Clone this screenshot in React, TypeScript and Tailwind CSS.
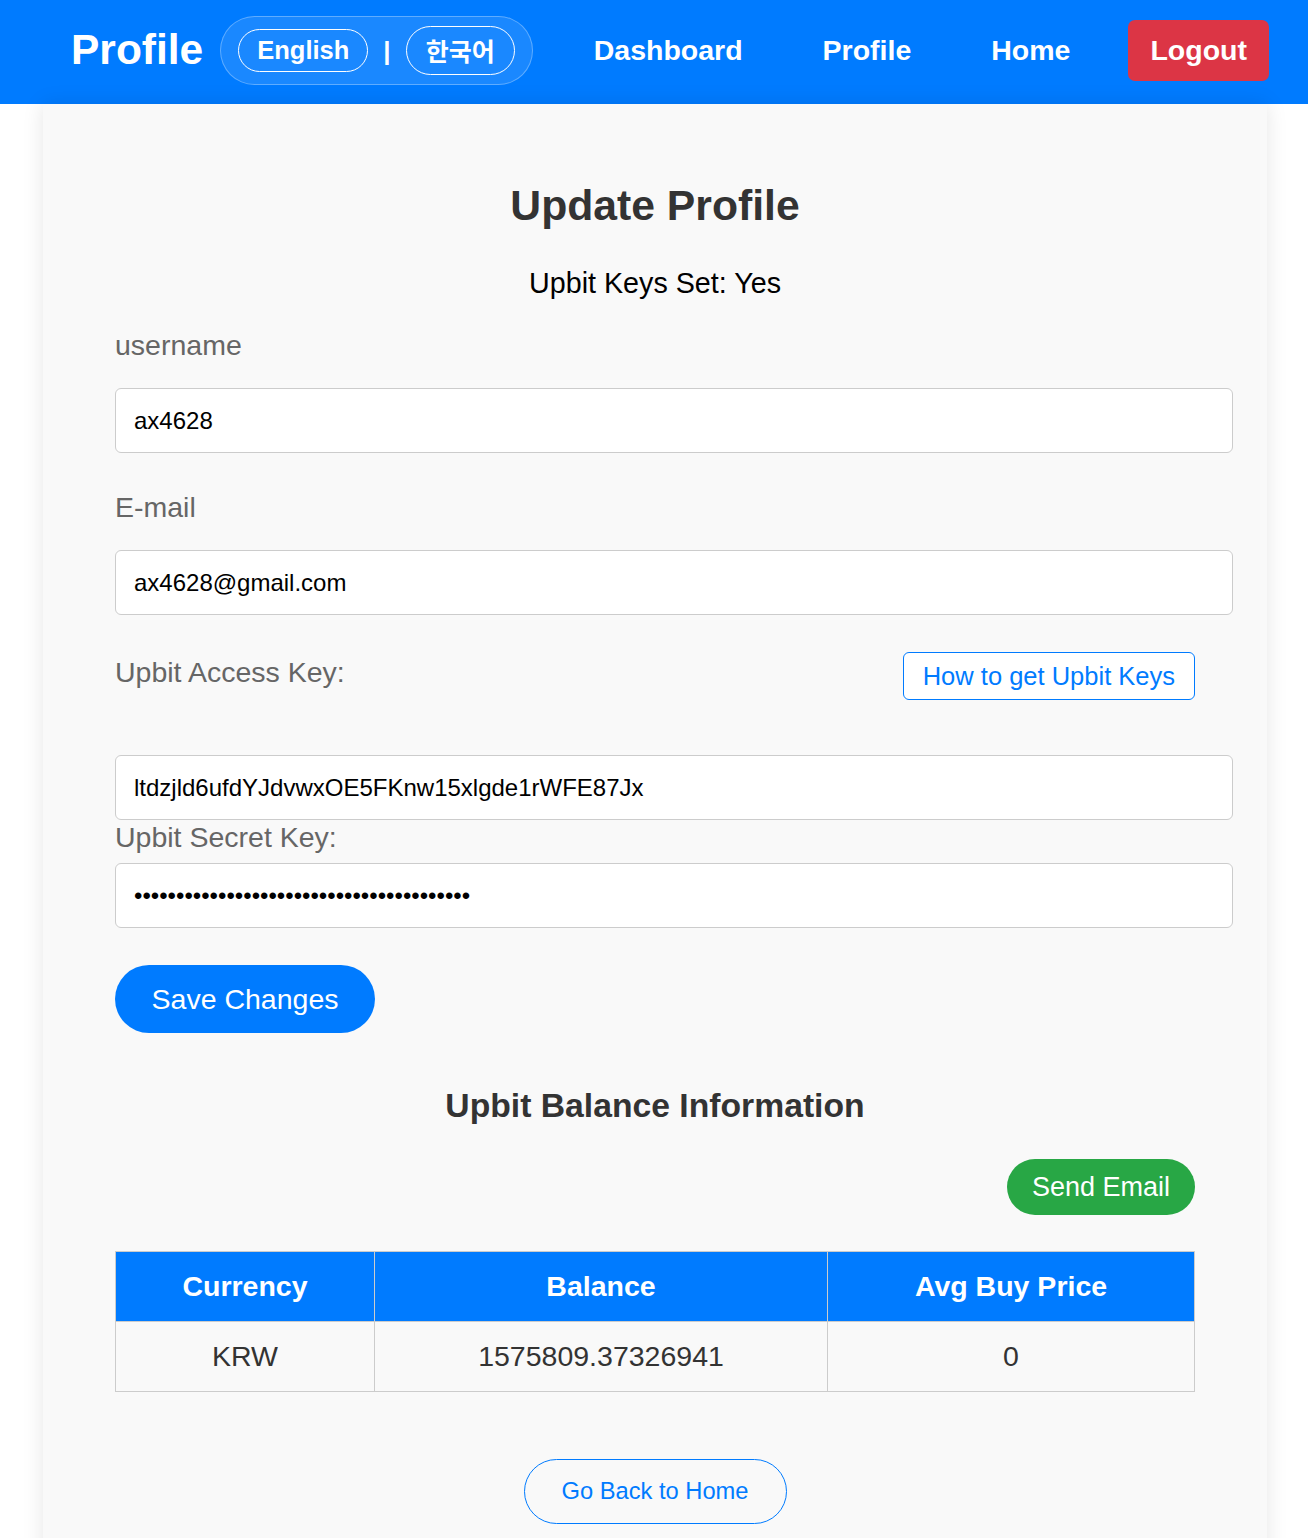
import React from "react";

const F = { fontFamily: '"Liberation Sans", Arial, sans-serif' };

const inputCls =
  "w-[1118px] rounded-[6px] border border-[#ccc] bg-white px-[18px] py-[18px] text-[24px] leading-[27px] text-black";

export default function App() {
  return (
    <div className="min-h-[1538px] bg-white" style={F}>
      <nav className="flex h-[104px] items-center bg-[#007bff] pb-[3px] pl-[71px] pr-[39px] text-white">
        <div className="flex items-center">
          <span className="text-[42.5px] font-bold leading-none">Profile</span>
          <div className="ml-[17px] flex items-center rounded-full border border-white/30 bg-white/10 px-[17px] py-[9px]">
            <button className="rounded-full border border-white px-[18px] py-[6px] text-[25.5px] font-bold leading-[1.15] text-white">
              English
            </button>
            <span className="mx-[15px] text-[26px] font-bold leading-none">|</span>
            <button
              className="rounded-full border border-white px-[19px] py-[6px] text-[25px] font-bold leading-[1.4] text-white"
              style={{ fontFamily: '"Noto Sans CJK KR", sans-serif' }}
            >
              한국어
            </button>
          </div>
        </div>
        <div className="ml-auto flex items-center">
          <a className="text-[28.5px] font-bold">Dashboard</a>
          <a className="ml-[80px] text-[28.5px] font-bold">Profile</a>
          <a className="ml-[80px] text-[28.5px] font-bold">Home</a>
          <button className="ml-[58px] flex h-[61px] items-center rounded-[7px] bg-[#dc3545] px-[22px] text-[28.5px] font-bold text-white">
            Logout
          </button>
        </div>
      </nav>

      <div className="ml-[43px] w-[1224px] bg-[#f9f9f9] px-[72px] pb-[40px] pt-[77px] shadow-[0_0_20px_rgba(0,0,0,0.1)]">
        <h2 className="text-center text-[42.7px] font-bold leading-[49px] text-[#333]">Update Profile</h2>
        <p className="mt-[37px] text-center text-[28.7px] leading-[32px] text-black">Upbit Keys Set: Yes</p>

        <label className="mt-[30px] block text-[28.5px] leading-[32px] text-[#666]">username</label>
        <div className={"mt-[27px] " + inputCls}>ax4628</div>

        <label className="mt-[38px] block text-[28.5px] leading-[32px] text-[#666]">E-mail</label>
        <div className={"mt-[27px] " + inputCls}>ax4628@gmail.com</div>

        <div className="mt-[37px] flex items-start justify-between">
          <label className="mt-[4px] block text-[28.5px] leading-[32px] text-[#666]">Upbit Access Key:</label>
          <button className="h-[48px] rounded-[6px] border border-[#007bff] bg-white px-[19px] text-[25.5px] text-[#007bff]">
            How to get Upbit Keys
          </button>
        </div>
        <div className={"mt-[55px] " + inputCls}>ltdzjld6ufdYJdvwxOE5FKnw15xlgde1rWFE87Jx</div>

        <label className="mt-[1px] block text-[28.5px] leading-[32px] text-[#666]">Upbit Secret Key:</label>
        <div className={"mt-[10px] " + inputCls}>
          <span>{"•".repeat(40)}</span>
        </div>

        <button className="mt-[37px] h-[68px] w-[260px] rounded-full bg-[#007bff] text-[28.5px] text-white">
          Save Changes
        </button>

        <h3 className="mt-[53px] text-center text-[33.7px] font-bold leading-[39px] text-[#333]">
          Upbit Balance Information
        </h3>

        <div className="mt-[34px] flex justify-end">
          <button className="h-[56px] w-[188px] rounded-full bg-[#28a745] text-[27px] text-white">Send Email</button>
        </div>

        <table className="mt-[36px] w-[1080px] border-collapse text-center text-[28.5px]">
          <thead>
            <tr className="h-[70px] bg-[#007bff] text-white">
              <th className="w-[259px] border border-[#ccc] font-bold">Currency</th>
              <th className="w-[453px] border border-[#ccc] font-bold">Balance</th>
              <th className="border border-[#ccc] font-bold">Avg Buy Price</th>
            </tr>
          </thead>
          <tbody>
            <tr className="h-[70px] text-[#333]">
              <td className="border border-[#ccc]">KRW</td>
              <td className="border border-[#ccc]">1575809.37326941</td>
              <td className="border border-[#ccc]">0</td>
            </tr>
          </tbody>
        </table>

        <div className="mt-[67px] flex justify-center">
          <button className="h-[65px] w-[263px] rounded-full border border-[#007bff] bg-transparent text-[23.7px] text-[#007bff]">
            Go Back to Home
          </button>
        </div>
      </div>
    </div>
  );
}
